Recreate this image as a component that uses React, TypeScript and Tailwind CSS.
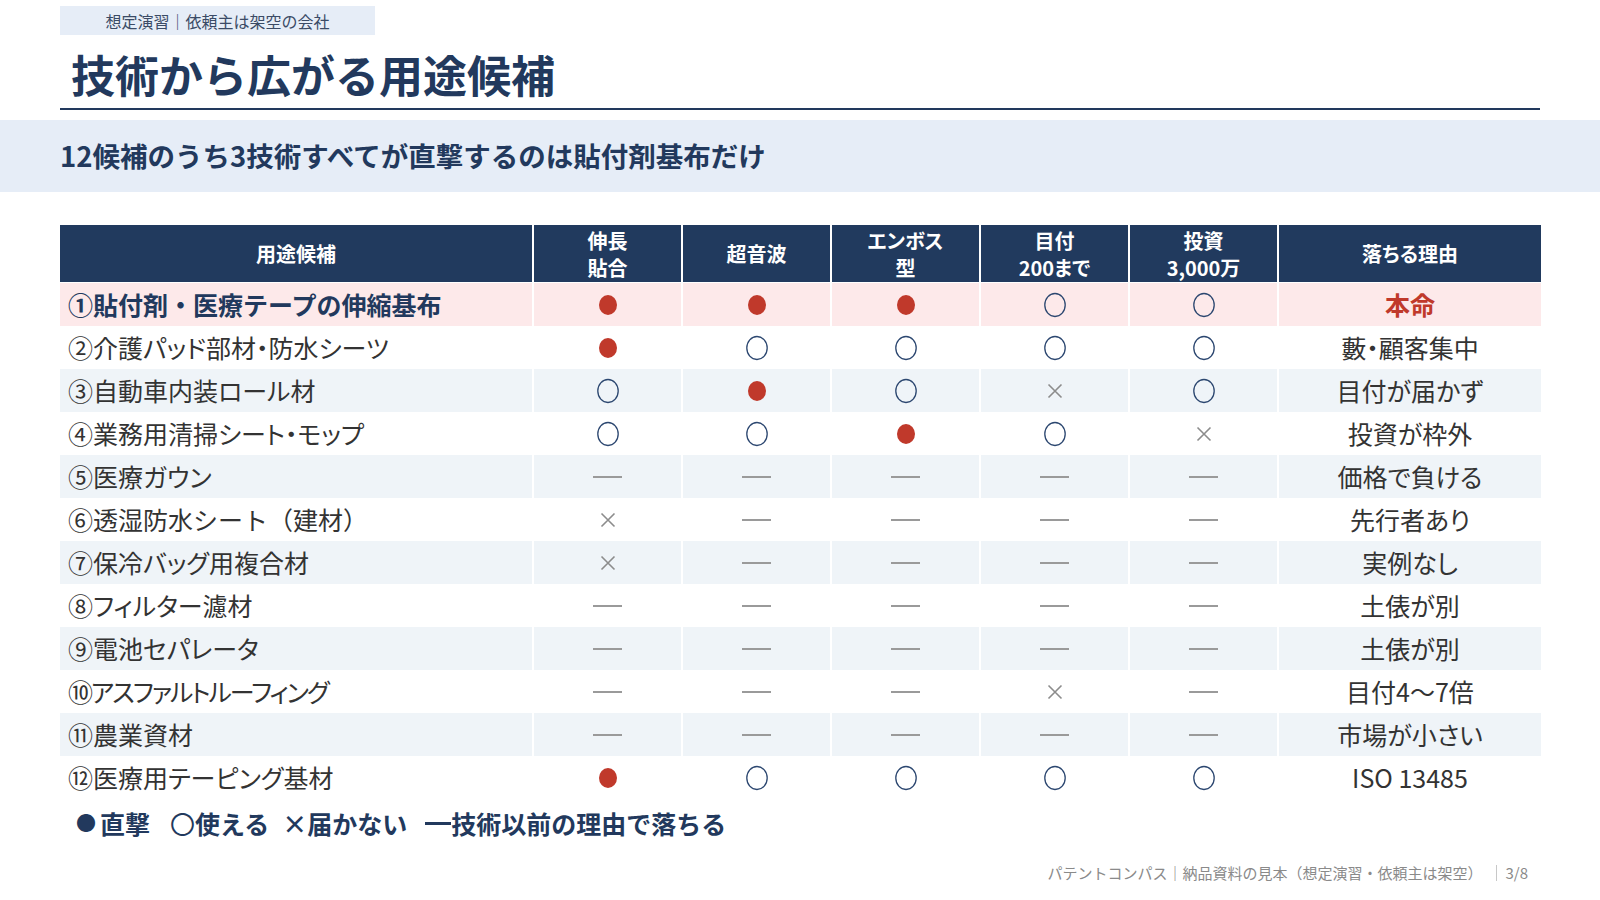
import React from "react";

type Sym = "dot" | "circle" | "x" | "dash";

const rows: { name: string; syms: Sym[]; reason: string; cls: string }[] = [
  { name: "①貼付剤・医療テープの伸縮基布", syms: ["dot", "dot", "dot", "circle", "circle"], reason: "本命", cls: "" },
  { name: "②介護パッド部材・防水シーツ", syms: ["dot", "circle", "circle", "circle", "circle"], reason: "藪・顧客集中", cls: "[font-feature-settings:'palt']" },
  { name: "③自動車内装ロール材", syms: ["circle", "dot", "circle", "x", "circle"], reason: "目付が届かず", cls: "[font-feature-settings:'palt']" },
  { name: "④業務用清掃シート・モップ", syms: ["circle", "circle", "dot", "circle", "x"], reason: "投資が枠外", cls: "[font-feature-settings:'palt']" },
  { name: "⑤医療ガウン", syms: ["dash", "dash", "dash", "dash", "dash"], reason: "価格で負ける", cls: "[font-feature-settings:'palt']" },
  { name: "⑥透湿防水シート（建材）", syms: ["x", "dash", "dash", "dash", "dash"], reason: "先行者あり", cls: "" },
  { name: "⑦保冷バッグ用複合材", syms: ["x", "dash", "dash", "dash", "dash"], reason: "実例なし", cls: "[font-feature-settings:'palt']" },
  { name: "⑧フィルター濾材", syms: ["dash", "dash", "dash", "dash", "dash"], reason: "土俵が別", cls: "[font-feature-settings:'palt']" },
  { name: "⑨電池セパレータ", syms: ["dash", "dash", "dash", "dash", "dash"], reason: "土俵が別", cls: "[font-feature-settings:'palt']" },
  { name: "⑩アスファルトルーフィング", syms: ["dash", "dash", "dash", "x", "dash"], reason: "目付4〜7倍", cls: "[font-feature-settings:'palt'] tracking-[-2px]" },
  { name: "⑪農業資材", syms: ["dash", "dash", "dash", "dash", "dash"], reason: "市場が小さい", cls: "[font-feature-settings:'palt']" },
  { name: "⑫医療用テーピング基材", syms: ["dot", "circle", "circle", "circle", "circle"], reason: "ISO 13485", cls: "[font-feature-settings:'palt']" },
];

function Symbol({ s }: { s: Sym }) {
  if (s === "dot")
    return (
      <svg width="22" height="24" viewBox="0 0 22 24">
        <ellipse cx="11" cy="12" rx="9" ry="10" fill="#c0392b" />
      </svg>
    );
  if (s === "circle")
    return (
      <svg width="24" height="26" viewBox="0 0 24 26">
        <ellipse cx="12" cy="13" rx="10.2" ry="11.5" fill="none" stroke="#2c4770" strokeWidth="1.3" />
      </svg>
    );
  if (s === "x")
    return (
      <svg width="18" height="18" viewBox="0 0 18 18">
        <path d="M2.5 2.5 L15.5 15.5 M15.5 2.5 L2.5 15.5" stroke="#8c8c8c" strokeWidth="1.6" />
      </svg>
    );
  return <div className="w-[29px] h-[2px] bg-[#9a9a9a]" />;
}

const gridCols = "grid grid-cols-[472px_147px_147px_147px_147px_147px_262px] gap-x-[2px]";

export default function App() {
  return (
    <div
      className="w-[1600px] h-[900px] bg-white overflow-hidden relative"
      style={{ fontFamily: '"Noto Sans CJK JP", "Noto Sans", sans-serif' }}
    >
      {/* tag */}
      <div className="pt-[6px] pl-[60px]">
        <div className="w-[315px] h-[29px] bg-[#e6edf7] flex items-center justify-center text-[16px] text-[#3b4b66]">
          想定演習｜依頼主は架空の会社
        </div>
      </div>
      {/* title */}
      <div className="mx-[60px]">
        <div className="h-[73px] flex items-center pt-[4px] pl-[11px] text-[44px] font-bold text-[#22395d] leading-none">
          技術から広がる用途候補
        </div>
        <div className="h-[2px] bg-[#22395d]" />
      </div>
      {/* banner */}
      <div className="mt-[10px] h-[72px] bg-[#e6edf7] flex items-center pl-[60px]">
        <div className="text-[27.5px] font-bold text-[#22395d] leading-none">
          12候補のうち3技術すべてが直撃するのは貼付剤基布だけ
        </div>
      </div>
      {/* table */}
      <div className="mt-[33px] ml-[60px] w-[1480px]">
        <div className={`${gridCols} h-[57px] mb-[1px]`}>
          {["用途候補", "伸長\n貼合", "超音波", "エンボス\n型", "目付\n200まで", "投資\n3,000万", "落ちる理由"].map((h, i) => (
            <div
              key={i}
              className="bg-[#213a5e] text-white font-bold text-[20px] leading-[27px] flex items-center justify-center text-center whitespace-pre-line [font-feature-settings:'palt']"
            >
              {h}
            </div>
          ))}
        </div>
        {rows.map((r, i) => {
          const bg = i === 0 ? "bg-[#fde9ea]" : i % 2 === 0 ? "bg-[#eff4f8]" : "bg-white";
          return (
            <div key={i} className={`${gridCols} h-[43px]`}>
              <div
                className={`${bg} flex items-center pl-[8px] text-[25px] leading-none ${r.cls} ${
                  i === 0 ? "font-bold text-[#22395d]" : "text-[#333333]"
                }`}
              >
                {r.name}
              </div>
              {r.syms.map((s, j) => (
                <div key={j} className={`${bg} flex items-center justify-center`}>
                  <Symbol s={s} />
                </div>
              ))}
              <div
                className={`${bg} flex items-center justify-center text-[25px] leading-none [font-feature-settings:'palt'] ${
                  i === 0 ? "font-bold text-[#c0392b]" : "text-[#333333]"
                }`}
              >
                {r.reason}
              </div>
            </div>
          );
        })}
      </div>
      {/* legend */}
      <div className="mt-[8px] h-[32px] pl-[76px] flex items-center text-[25px] font-bold text-[#22395d] leading-none whitespace-pre">
        <span className="text-[20px] mr-[4px]">●</span>
        <span>直撃</span>
        <span className="ml-[20px] font-normal">〇</span>
        <span>使える</span>
        <span className="ml-[13px]">×</span>
        <span>届かない</span>
        <span className="ml-[18px] inline-block w-[26px] h-[3px] bg-[#22395d]" />
        <span>技術以前の理由で落ちる</span>
      </div>
      {/* footer */}
      <div className="mt-[24px] flex justify-end pr-[72px] text-[15px] text-[#8a8a8a] leading-[20px] items-center">
        <span>パテントコンパス｜納品資料の見本（想定演習・依頼主は架空）</span>
        <span className="ml-[14px] w-[1px] h-[16px] bg-[#c8c8c8]" />
        <span className="ml-[8px]">3/8</span>
      </div>
    </div>
  );
}
